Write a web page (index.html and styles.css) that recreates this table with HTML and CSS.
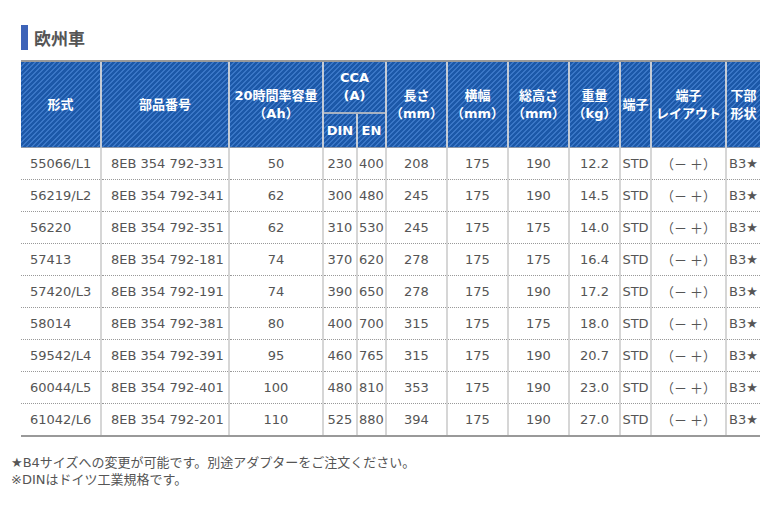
FILE: index.html
```html
<!DOCTYPE html>
<html lang="ja">
<head>
<meta charset="utf-8">
<title>欧州車</title>
<link rel="stylesheet" href="styles.css">
</head>
<body>
<div class="page">
  <h2 class="heading"><span class="heading-bar"></span>欧州車</h2>
  <table class="spec">
    <colgroup>
      <col class="c-type"><col class="c-part"><col class="c-cap"><col class="c-din"><col class="c-en">
      <col class="c-mm"><col class="c-mm"><col class="c-mm"><col class="c-kg"><col class="c-term"><col class="c-layout"><col class="c-base">
    </colgroup>
    <thead>
      <tr class="h1">
        <th rowspan="2">形式</th>
        <th rowspan="2">部品番号</th>
        <th rowspan="2">20時間率容量<br>（Ah）</th>
        <th colspan="2">CCA<br>(A)</th>
        <th rowspan="2">長さ<br>（mm）</th>
        <th rowspan="2">横幅<br>（mm）</th>
        <th rowspan="2">総高さ<br>（mm）</th>
        <th rowspan="2">重量<br>（kg）</th>
        <th rowspan="2">端子</th>
        <th rowspan="2">端子<br>レイアウト</th>
        <th rowspan="2">下部<br>形状</th>
      </tr>
      <tr class="h2">
        <th>DIN</th>
        <th>EN</th>
      </tr>
    </thead>
    <tbody>
      <tr><td class="l">55066/L1</td><td class="l">8EB 354 792-331</td><td>50</td><td>230</td><td>400</td><td>208</td><td>175</td><td>190</td><td>12.2</td><td>STD</td><td class="lay">（－ ＋）</td><td>B3★</td></tr>
      <tr><td class="l">56219/L2</td><td class="l">8EB 354 792-341</td><td>62</td><td>300</td><td>480</td><td>245</td><td>175</td><td>190</td><td>14.5</td><td>STD</td><td class="lay">（－ ＋）</td><td>B3★</td></tr>
      <tr><td class="l">56220</td><td class="l">8EB 354 792-351</td><td>62</td><td>310</td><td>530</td><td>245</td><td>175</td><td>175</td><td>14.0</td><td>STD</td><td class="lay">（－ ＋）</td><td>B3★</td></tr>
      <tr><td class="l">57413</td><td class="l">8EB 354 792-181</td><td>74</td><td>370</td><td>620</td><td>278</td><td>175</td><td>175</td><td>16.4</td><td>STD</td><td class="lay">（－ ＋）</td><td>B3★</td></tr>
      <tr><td class="l">57420/L3</td><td class="l">8EB 354 792-191</td><td>74</td><td>390</td><td>650</td><td>278</td><td>175</td><td>190</td><td>17.2</td><td>STD</td><td class="lay">（－ ＋）</td><td>B3★</td></tr>
      <tr><td class="l">58014</td><td class="l">8EB 354 792-381</td><td>80</td><td>400</td><td>700</td><td>315</td><td>175</td><td>175</td><td>18.0</td><td>STD</td><td class="lay">（－ ＋）</td><td>B3★</td></tr>
      <tr><td class="l">59542/L4</td><td class="l">8EB 354 792-391</td><td>95</td><td>460</td><td>765</td><td>315</td><td>175</td><td>190</td><td>20.7</td><td>STD</td><td class="lay">（－ ＋）</td><td>B3★</td></tr>
      <tr><td class="l">60044/L5</td><td class="l">8EB 354 792-401</td><td>100</td><td>480</td><td>810</td><td>353</td><td>175</td><td>190</td><td>23.0</td><td>STD</td><td class="lay">（－ ＋）</td><td>B3★</td></tr>
      <tr><td class="l">61042/L6</td><td class="l">8EB 354 792-201</td><td>110</td><td>525</td><td>880</td><td>394</td><td>175</td><td>190</td><td>27.0</td><td>STD</td><td class="lay">（－ ＋）</td><td>B3★</td></tr>
    </tbody>
  </table>
  <div class="notes">
    <p>★B4サイズへの変更が可能です。別途アダプターをご注文ください。</p>
    <p>※DINはドイツ工業規格です。</p>
  </div>
</div>
</body>
</html>
```

FILE: styles.css
```css
html, body {
  margin: 0;
  padding: 0;
  background: #fff;
}

.page {
  padding: 25px 0 0 11px;
  font-family: "DejaVu Sans", "Noto Sans CJK JP", sans-serif;
  color: #555;
}

.heading {
  display: flex;
  align-items: center;
  gap: 6px;
  margin: 0 0 10px 10px;
  height: 25px;
  font-family: "Noto Sans CJK JP", sans-serif;
  font-size: 17px;
  font-weight: bold;
  color: #555;
  line-height: 25px;
}

.heading-bar {
  display: block;
  width: 7px;
  height: 25px;
  background: #3d63b8;
}

.spec {
  margin-left: 10px;
  width: 739px;
  table-layout: fixed;
  border-collapse: collapse;
  font-size: 13px;
}

.c-type { width: 80px; }
.c-part { width: 128px; }
.c-cap { width: 94px; }
.c-din { width: 34px; }
.c-en { width: 29px; }
.c-mm { width: 61px; }
.c-kg { width: 51px; }
.c-term { width: 31px; }
.c-layout { width: 75px; }
.c-base { width: 34px; }

.spec th {
  padding: 0;
  color: #fff;
  font-weight: bold;
  font-size: 13px;
  line-height: 18px;
  text-align: center;
  vertical-align: middle;
  background: repeating-linear-gradient(135deg, #1c58a8 0 2.2px, #3a76c6 2.2px 3.6px);
  border-left: 2px solid #c5ccd6;
  border-top: 2px solid #999;
  border-bottom: 1px solid #8d98a8;
}

.spec th:first-child { border-left: 0; }
.spec .h1 th { height: 50px; }
.spec .h2 th {
  height: 33px;
  border-top: 2px solid #a9b3c2;
}
.spec .h2 th:first-child { border-left: 2px solid #c5ccd6; }

.spec td {
  height: 31px;
  padding: 0;
  text-align: center;
  vertical-align: middle;
  white-space: nowrap;
  overflow: visible;
  color: #555;
  border-left: 2px solid #d6d6d6;
  border-bottom: 1px dotted #999;
}

.spec td:first-child { border-left: 0; }
.spec td.l {
  text-align: left;
  padding-left: 9px;
}
.spec td.lay {
  font-family: "Noto Sans CJK JP", sans-serif;
}
.spec tbody tr:last-child td {
  border-bottom: 2px solid #999;
}

.notes {
  margin-top: 17px;
  font-family: "DejaVu Sans", "Noto Sans CJK JP", sans-serif;
  font-size: 13px;
  line-height: 17px;
  color: #555;
}

.notes p {
  margin: 0;
}
```
